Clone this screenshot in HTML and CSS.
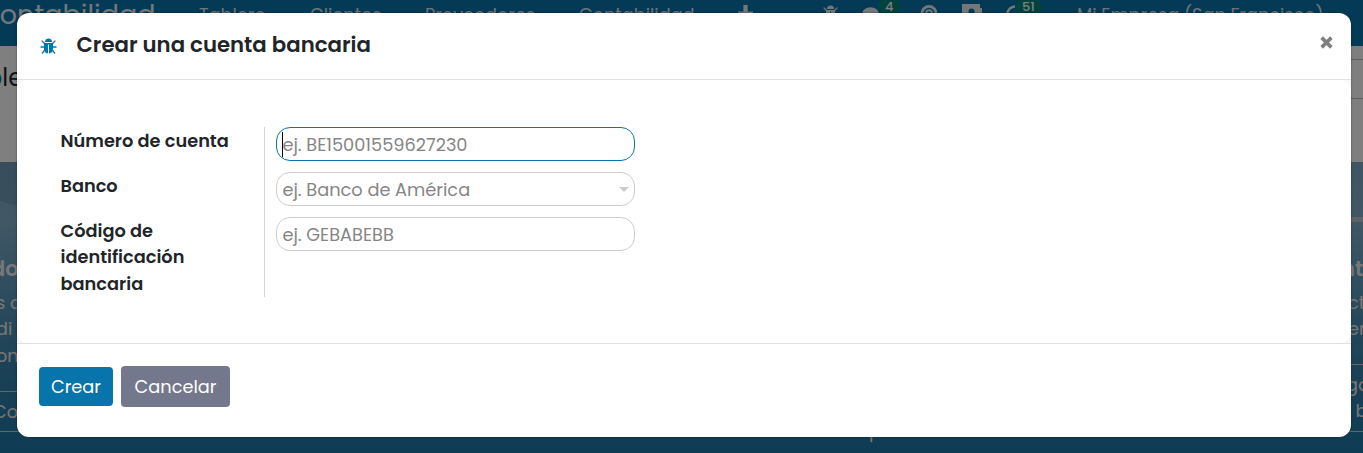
FILE: index.html
```html
<!DOCTYPE html>
<html lang="es">
<head>
<meta charset="utf-8">
<title>Crear una cuenta bancaria</title>
<link rel="stylesheet" href="styles.css">
</head>
<body>
<svg class="defs" width="0" height="0">
  <symbol id="bug" viewBox="0 0 17 17">
    <path d="M5 4a3.5 3.5 0 0 1 7 0z"/>
    <path d="M4 5h9v6a4.5 4.5 0 0 1-4 4.5V6.5H8v9A4.5 4.5 0 0 1 4 11z"/>
    <path d="M1.6 2.6 4.5 5.5M15.4 2.6l-2.9 2.9M.5 9H4M13 9h3.500M4.600 12.200 2 15.500M12.400 12.200l2.600 3.300" fill="none" stroke="currentColor" stroke-width="1.3"/>
  </symbol>
</svg>
<div class="page">
  <nav class="navbar">
    <span class="brand">Contabilidad</span>
    <span class="menu m-tablero">Tablero</span>
    <span class="menu m-clientes">Clientes</span>
    <span class="menu m-prov">Proveedores</span>
    <span class="menu m-cont">Contabilidad</span>
    <svg class="ico i-plus" viewBox="0 0 16 16"><path d="M6 0h4v6h5v4h-5v6H6v-6H1V6h5z"/></svg>
    <svg class="ico i-bug"><use href="#bug"/></svg>
    <svg class="ico i-chat" viewBox="0 0 18 16"><ellipse cx="9" cy="7.500" rx="8.500" ry="6"/></svg>
    <span class="badge b-four">4</span>
    <svg class="ico i-help" viewBox="0 0 18 18"><path d="M9 1.500a7.500 7.500 0 1 1 0 15a7.500 7.500 0 0 1 0-15" fill="none" stroke="currentColor" stroke-width="3"/><path d="M6 8.500q0-3 3-3t3 3l-3 3" fill="none" stroke="currentColor" stroke-width="2"/></svg>
    <svg class="ico i-book" viewBox="0 0 20 18"><path fill-rule="evenodd" d="M0 0h18v4h2v5h-2v9H0zM9.500 4.500a3 3 0 0 0-3 3v4h6v-4a3 3 0 0 0-3-3z"/></svg>
    <svg class="ico i-clock" viewBox="0 0 18 18"><path d="M9 1.500a7.500 7.500 0 0 0 0 15" fill="none" stroke="currentColor" stroke-width="2.500"/></svg>
    <span class="badge b-many">51</span>
    <span class="menu m-company">Mi Empresa (San Francisco)</span>
  </nav>
  <div class="control">
    <span class="crumb"><b>b</b>le</span>
    <div class="search"></div>
  </div>
  <div class="hero">
    <div class="step step-left">
      <div class="rule"></div>
      <div class="step-title">do</div>
      <div class="line">s d</div><div class="line">di</div><div class="line">on</div>
      <div class="outline">Co</div>
    </div>
    <div class="mid">p</div>
    <div class="step step-right">
      <div class="rule shown"></div>
      <div class="step-title">nt</div>
      <div class="line">ct</div><div class="line">er</div>
      <div class="outline tall">go<br>&nbsp; b</div>
    </div>
  </div>
</div>
<div class="backdrop">
  <section class="modal">
    <header class="modal-head">
      <svg class="head-bug"><use href="#bug"/></svg>
      <h1 class="title">Crear una cuenta bancaria</h1>
      <svg class="close" viewBox="0 0 12 12"><path d="M1.500 1.500l9 9M10.500 1.500l-9 9" stroke="currentColor" stroke-width="3.300" fill="none"/></svg>
    </header>
    <div class="body-wrap">
      <main class="modal-body">
        <div class="labels">
          <label>Número de cuenta</label>
          <label>Banco</label>
          <label>Código de<br>identificación<br>bancaria</label>
        </div>
        <div class="fields">
          <div class="field active"><i class="caret"></i><span>ej. BE15001559627230</span></div>
          <div class="field"><span>ej. Banco de América</span><i class="arrow"></i></div>
          <div class="field"><span>ej. GEBABEBB</span></div>
        </div>
      </main>
    </div>
    <footer class="modal-foot">
      <button class="btn primary">Crear</button>
      <button class="btn secondary">Cancelar</button>
    </footer>
  </section>
</div>
</body>
</html>
```
FILE: styles.css
```css
* { box-sizing: border-box; }
html, body { margin: 0; height: 453px; overflow: hidden; }
body { font-family: Poppins, Inter, "Open Sans", sans-serif; font-size: 17.750px; color: #212529; }
.defs { position: absolute; }
svg { fill: currentColor; flex: none; }
.page { height: 453px; overflow: hidden; background: #fff; }

.navbar { display: grid; height: 46px; background: #0874ac; color: #fff; white-space: nowrap; overflow: hidden; }
.navbar > * { grid-area: 1 / 1; justify-self: start; align-self: start; }
.brand { margin-left: -21px; margin-top: -2px; font-size: 27px; line-height: 34px; opacity: .9; }
.menu { margin-top: 4px; font-size: 17.700px; line-height: 22px; opacity: .85; }
.m-tablero { margin-left: 199px; }
.m-clientes { margin-left: 310px; }
.m-prov { margin-left: 425px; }
.m-cont { margin-left: 579px; }
.m-company { margin-left: 1077px; }
.ico { width: 17px; height: 17px; margin-top: 5px; opacity: .9; }
.i-plus { margin-left: 737px; }
.i-bug { margin-left: 822px; }
.i-chat { margin-left: 862px; }
.i-help { margin-left: 920px; width: 18px; }
.i-book { margin-left: 962px; width: 20px; height: 18px; margin-top: 4px; }
.i-clock { margin-left: 1006px; width: 18px; height: 18px; }
.badge { margin-top: -2px; height: 17px; padding: 0 7px; border-radius: 9px; background: #00847a; font-size: 13px; font-weight: 500; line-height: 18px; }
.b-four { margin-left: 878px; }
.b-many { margin-left: 1015px; }

.control { display: flex; justify-content: space-between; height: 116px; }
.crumb { margin: 14px 0 0 -14px; font-size: 24px; line-height: 36px; }
.crumb b { font-weight: 400; color: #0874ac; }
.search { width: 30px; height: 40px; margin-top: 13px; border: 1px solid #bbb; border-width: 1px 0; }

.hero { display: flex; justify-content: space-between; height: 291px; color: #eee;
  background: radial-gradient(circle at 30px -35px, rgba(70,110,140,.25) 0 79px, transparent 80px), linear-gradient(#80aac6, #82aecb 20%, #5c9abd 45%, #3884ac 70%, #1c79ab 100%); }
.step { width: 22px; overflow: hidden; white-space: nowrap; line-height: 26.400px; }
.rule { height: 5px; margin: 55px 0 34px; }
.rule.shown { background: #bac6cf; }
.step-title { font-size: 21px; font-weight: 600; height: 34px; }
.line { font-size: 17.700px; }
.step-left .step-title { margin-left: -9px; }
.step-left .line { margin-left: -4px; }
.outline { margin-top: 22px; height: 41px; border: 1px solid #ccc; border-width: 1px 0; line-height: 39px; margin-left: -7px; }
.outline.tall { margin: 21px 0 0 -2px; height: 68px; line-height: 26.400px; padding-top: 7px; }
.step-right { width: 15px; }
.step-right .step-title { margin-left: -7px; }
.mid { align-self: end; line-height: 24px; margin: 0 0 10px 380px; }

.backdrop { position: absolute; inset: 0; padding: 13px 12px 16px 17px; background: rgba(0,0,0,.5); }
.modal { display: flex; flex-direction: column; height: 424px; border-radius: 12px; background: #fff; overflow: hidden; box-shadow: 0 0 2px rgba(0,0,0,.5); }
.modal-head { display: flex; align-items: center; height: 67px; padding: 0 18.500px 2px 23px; border-bottom: 1px solid #dee2e6; }
.head-bug { width: 17px; height: 17px; color: #0874ac; margin: 3px 19px 0 0; }
.title { margin: 0; flex: 1; padding-left: .5px; font-size: 21.250px; font-weight: 600; line-height: 32px; }
.close { width: 13px; height: 13px; color: #7f7f7f; margin-top: -5px; }
.body-wrap { height: 264px; background: #f8f8f8; border-bottom: 1px solid #dee2e6; }
.modal-body { display: flex; height: 263px; padding: 47px 43px; border-radius: 12px; background: #fff; }
.labels { width: 205px; height: 170px; display: flex; flex-direction: column; padding: 1px 0 0 .5px; border-right: 1px solid #d5d7d9; font-weight: 600; line-height: 26.400px; }
.labels label { margin-bottom: 18.500px; }
.fields { display: flex; flex-direction: column; gap: 11px; margin-left: 11px; }
.field { display: flex; align-items: center; width: 359px; height: 34px; padding: 1px 5px 0; border: 1px solid #ccc; border-radius: 14px; color: #858585; white-space: nowrap; }
.field.active { border-color: #0874ac; }
.caret { width: 1px; height: 25px; background: #000; margin-right: -1px; }
.field span { padding-left: .4px; }
.arrow { margin-left: auto; border: 5px solid transparent; border-top-color: #ccc; border-bottom: 0; }
.modal-foot { display: flex; align-items: center; gap: 8px; padding: 21px 22px 23px; height: 86px; flex: none; }
.btn { display: flex; justify-content: center; align-items: center; border: 0; padding: 0; border-radius: 4px; color: #fff; font: inherit; white-space: nowrap; }
.primary { width: 74px; height: 39px; background: #0874ac; }
.secondary { width: 109px; height: 41px; background: #74788d; }
```
